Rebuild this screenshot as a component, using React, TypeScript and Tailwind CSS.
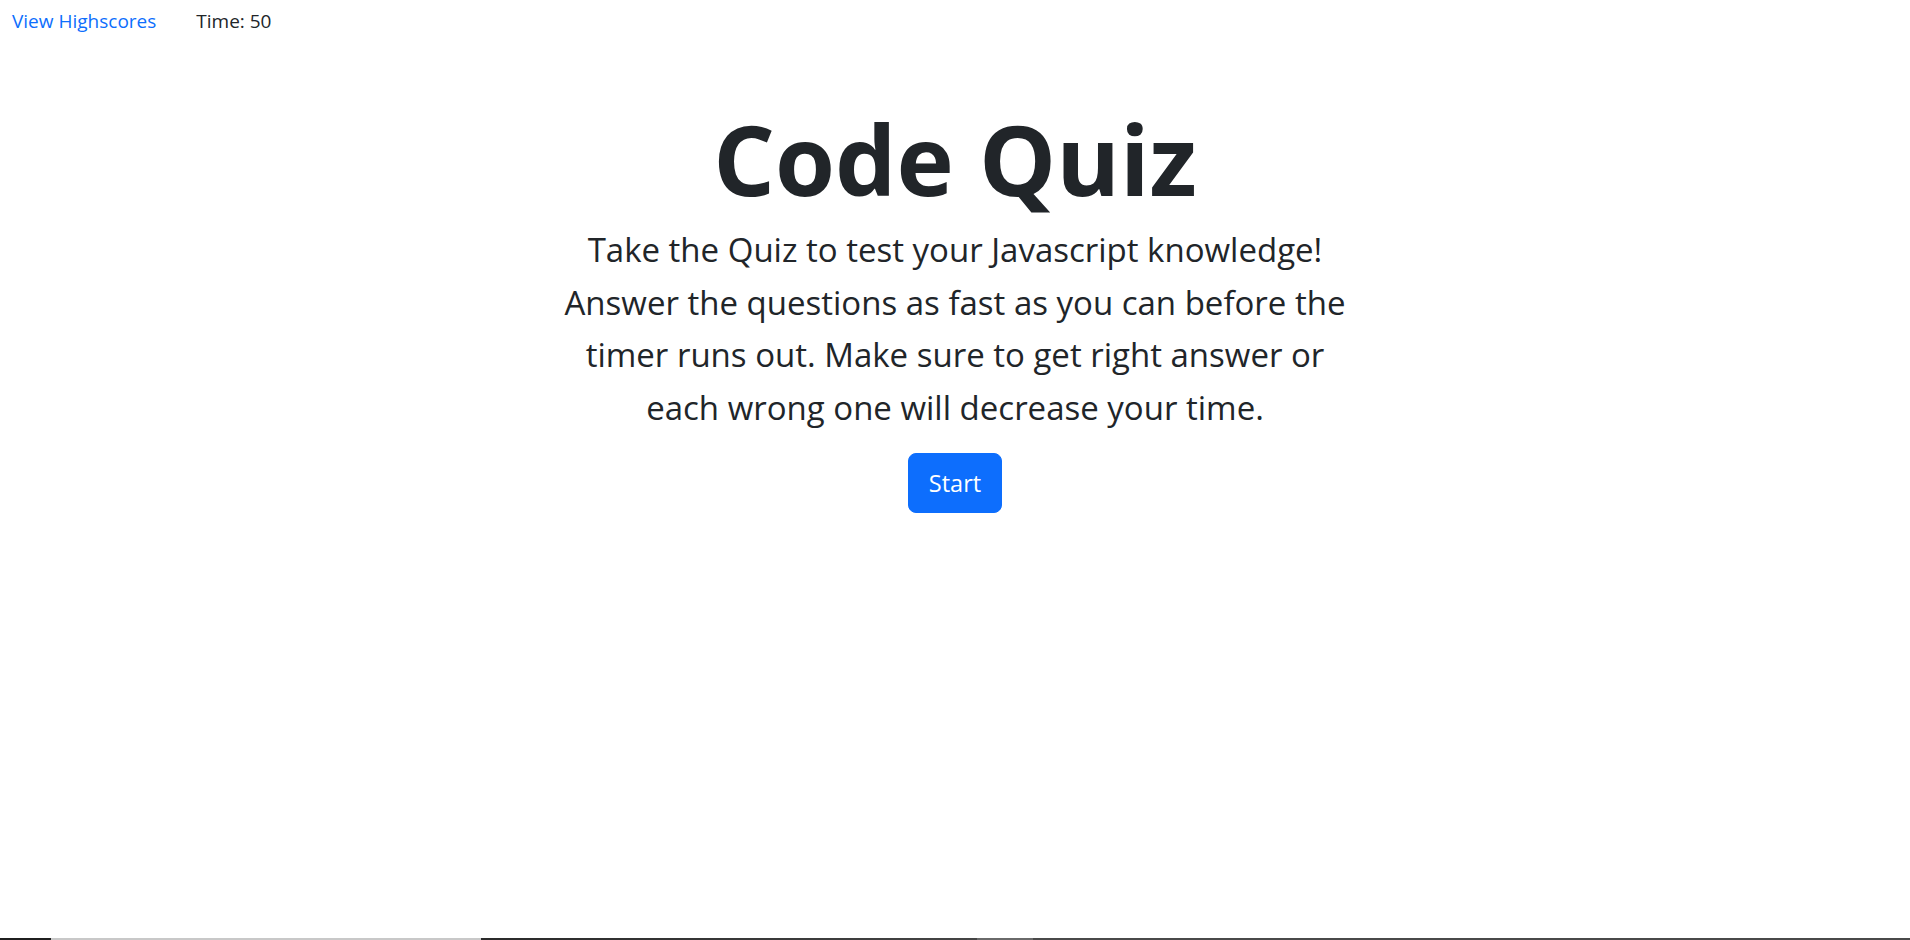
import React from 'react';

const App: React.FC = () => {
  return (
    <div className="min-h-screen flex flex-col bg-white text-[#212529] font-['Open_Sans',sans-serif]">
      {/* Top bar */}
      <nav className="flex items-center pl-3 pt-[6px] text-[19px] leading-[30px]">
        <a href="#" className="text-[#0d6efd]">View Highscores</a>
        <span className="ml-[40px]">Time: 50</span>
      </nav>

      <main className="flex-grow flex flex-col items-center">
        <h1 className="mt-[64px] text-[97px] leading-[1.2] font-bold">Code Quiz</h1>
        <p className="mt-[8px] w-[900px] text-center text-[33px] leading-[52.5px]">
          Take the Quiz to test your Javascript knowledge!
          <br />
          Answer the questions as fast as you can before the
          <br />
          timer runs out. Make sure to get right answer or
          <br />
          each wrong one will decrease your time.
        </p>
        <button className="mt-[19px] bg-[#0d6efd] text-white text-[23.5px] leading-[38px] px-5 py-2.5 rounded-lg border border-[#0d6efd]">
          Start
        </button>
      </main>

      {/* bottom edge strip */}
      <div className="flex h-[2px]">
        <div className="w-[51px] bg-[#1f1f1f]" />
        <div className="w-[430px] bg-[#c8c8c8]" />
        <div className="w-[496px] bg-gradient-to-r from-[#2a2a2a] to-[#454545]" />
        <div className="w-[56px] bg-[#6a6a6a]" />
        <div className="flex-grow bg-[#4a4a4a]" />
      </div>
    </div>
  );
};

export default App;
